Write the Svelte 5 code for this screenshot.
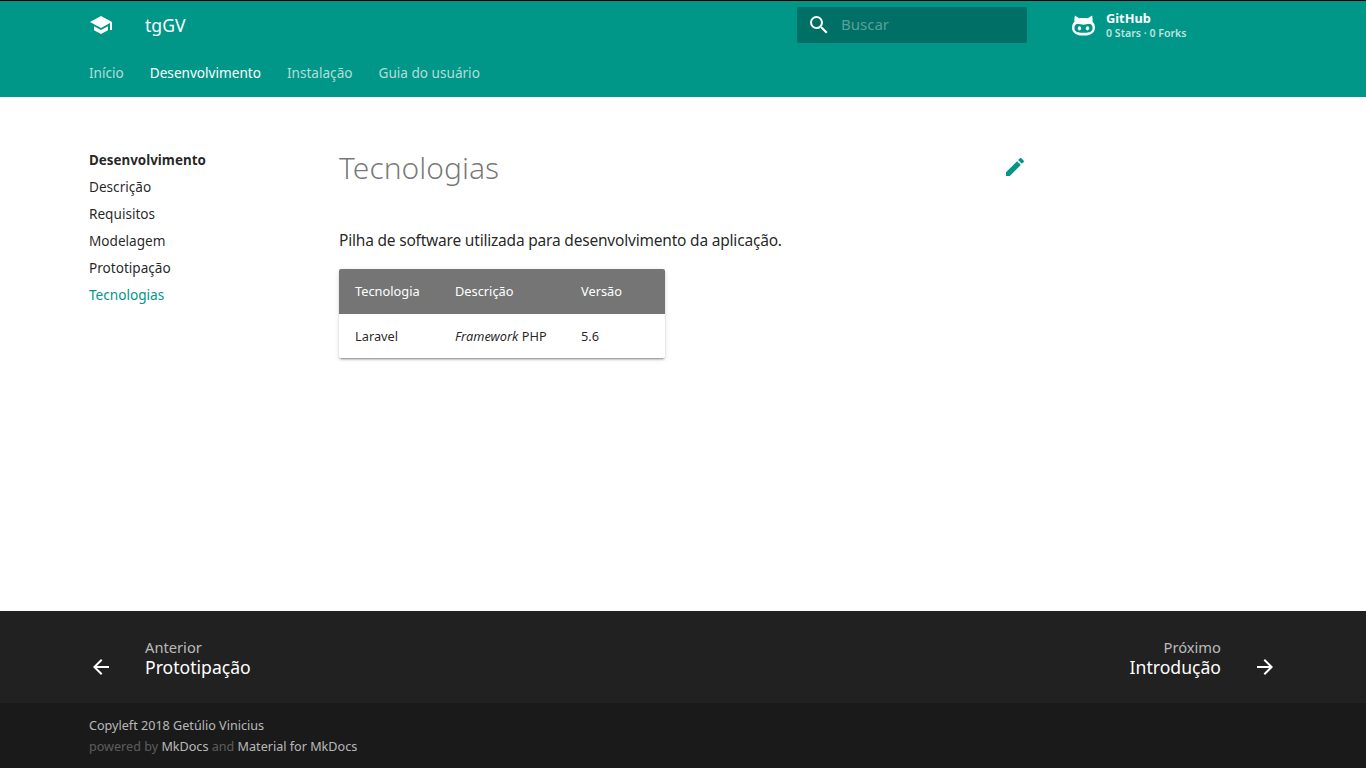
<script>
  const tabs = [
    { label: 'Início' },
    { label: 'Desenvolvimento', active: true },
    { label: 'Instalação' },
    { label: 'Guia do usuário' }
  ];

  const sideLinks = [
    { label: 'Descrição' },
    { label: 'Requisitos' },
    { label: 'Modelagem' },
    { label: 'Prototipação' },
    { label: 'Tecnologias', active: true }
  ];
</script>

<div class="page">
  <header class="header">
    <div class="bar">
      <svg class="icon logo" viewBox="0 0 24 24"><path d="M5 13.18v4L12 21l7-3.82v-4L12 17l-7-3.82zM12 3L1 9l11 6 9-4.91V17h2V9L12 3z" /></svg>
      <span class="site-name">tgGV</span>
      <div class="search">
        <svg class="icon" viewBox="0 0 24 24"><path d="M15.5 14h-.79l-.28-.27A6.47 6.47 0 0 0 16 9.5 6.5 6.5 0 1 0 9.5 16c1.61 0 3.09-.59 4.23-1.57l.27.28v.79l5 4.99L20.49 19l-4.99-5zm-6 0C7.01 14 5 11.99 5 9.5S7.01 5 9.5 5 14 7.01 14 9.5 11.99 14 9.5 14z" /></svg>
        <span class="placeholder">Buscar</span>
      </div>
      <div class="repo">
        <svg class="icon cat" viewBox="0 0 24 22">
          <path fill-rule="evenodd" d="M3 .5 L7.5 3.5 C10 3 14 3 16.5 3.5 L21 .5 C21.5 2.5 21.7 5 21.5 7 C23.2 8.5 24 10.5 24 13 C24 19 19 21.5 12 21.5 C5 21.5 0 19 0 13 C0 10.5 .8 8.5 2.5 7 C2.3 5 2.5 2.5 3 .5 Z M5.5 9.5 C3.5 9.5 2.5 11.5 2.5 13.5 C2.5 17 5 18.5 12 18.5 C19 18.5 21.5 17 21.5 13.5 C21.5 11.5 20.5 9.5 18.5 9.5 C16 9.5 14 10.2 12 10.2 C10 10.2 8 9.5 5.5 9.5 Z" />
          <ellipse cx="7.8" cy="14" rx="1.7" ry="2.2" />
          <ellipse cx="16.2" cy="14" rx="1.7" ry="2.2" />
        </svg>
        <div class="repo-text">
          <strong>GitHub</strong>
          <span>0 Stars · 0 Forks</span>
        </div>
      </div>
    </div>
    <nav class="tabs">
      {#each tabs as tab}
        <a href="#top" class:active={tab.active}>{tab.label}</a>
      {/each}
    </nav>
  </header>

  <main class="main">
    <aside class="sidebar">
      <h2>Desenvolvimento</h2>
      <ul>
        {#each sideLinks as link}
          <li><a href="#top" class:active={link.active}>{link.label}</a></li>
        {/each}
      </ul>
    </aside>
    <article class="content">
      <div class="title-row">
        <h1>Tecnologias</h1>
        <svg class="icon edit" viewBox="0 0 24 24"><path d="M3 17.25V21h3.75L17.81 9.94l-3.75-3.75L3 17.25zM20.71 7.04c.39-.39.39-1.02 0-1.41l-2.34-2.34c-.39-.39-1.02-.39-1.41 0l-1.83 1.83 3.75 3.75 1.83-1.83z" /></svg>
      </div>
      <p>Pilha de software utilizada para desenvolvimento da aplicação.</p>
      <table>
        <thead>
          <tr><th class="col-name">Tecnologia</th><th class="col-desc">Descrição</th><th class="col-version">Versão</th></tr>
        </thead>
        <tbody>
          <tr><td>Laravel</td><td><em>Framework</em> PHP</td><td>5.6</td></tr>
        </tbody>
      </table>
    </article>
  </main>

  <footer>
    <div class="pager">
      <a class="prev" href="#top">
        <svg class="icon" viewBox="0 0 24 24"><path d="M20 11H7.83l5.59-5.59L12 4l-8 8 8 8 1.41-1.41L7.83 13H20v-2z" /></svg>
        <div>
          <small>Anterior</small>
          <span>Prototipação</span>
        </div>
      </a>
      <a class="next" href="#top">
        <div>
          <small>Próximo</small>
          <span>Introdução</span>
        </div>
        <svg class="icon" viewBox="0 0 24 24"><path d="M12 4l-1.41 1.41L16.17 11H4v2h12.17l-5.58 5.59L12 20l8-8z" /></svg>
      </a>
    </div>
    <div class="meta">
      <div class="copyright">Copyleft 2018 Getúlio Vinicius</div>
      <div class="powered">powered by <a href="#top">MkDocs</a> and <a href="#top">Material for MkDocs</a></div>
    </div>
  </footer>
</div>

<style>
  :global(body) {
    margin: 0;
    font-family: "Noto Sans", "Open Sans", sans-serif;
    color: rgba(0, 0, 0, 0.87);
    background: #fff;
  }

  a {
    text-decoration: none;
    color: inherit;
  }

  .page {
    display: flex;
    flex-direction: column;
    min-height: 768px;
  }

  .icon {
    width: 24px;
    height: 24px;
    fill: currentColor;
    flex: none;
  }

  .header {
    background: #009688;
    border-top: 1px solid #000;
    color: #fff;
    padding: 0 73px;
  }

  .bar {
    display: flex;
    align-items: center;
    height: 48px;
    padding: 0 4px;
  }

  .logo {
    margin-left: 12px;
  }

  .site-name {
    margin-left: 32px;
    font-size: 17.6px;
  }

  .search {
    display: flex;
    align-items: center;
    width: 230px;
    height: 36px;
    margin-left: auto;
    background: #006f65;
    border-radius: 2px;
    box-sizing: border-box;
    padding-left: 10px;
  }

  .placeholder {
    margin-left: 10px;
    margin-bottom: 2px;
    font-size: 15px;
    color: rgba(255, 255, 255, 0.36);
  }

  .repo {
    display: flex;
    align-items: center;
    width: 218px;
    box-sizing: border-box;
    margin-left: 44px;
    padding-left: 1px;
  }

  .cat {
    width: 23px;
    height: 21px;
  }

  .repo-text {
    display: flex;
    flex-direction: column;
    margin-left: 11px;
    margin-top: 1px;
    font-size: 10.6px;
    line-height: 15px;
    font-weight: 600;
    color: rgba(255, 255, 255, 0.75);
  }

  .repo-text strong {
    font-size: 12.8px;
    font-weight: 700;
    color: #fff;
  }

  .tabs {
    display: flex;
    gap: 26px;
    height: 48px;
    box-sizing: border-box;
    align-items: center;
    padding: 0 0 2px 16px;
    font-size: 13.6px;
    color: rgba(255, 255, 255, 0.7);
  }

  .tabs a.active {
    color: #fff;
  }

  .main {
    flex: 1;
    display: flex;
    padding: 48px 89px 0;
    box-sizing: border-box;
    width: 1366px;
  }

  .sidebar {
    width: 250px;
    flex: none;
    font-size: 13.6px;
    padding-top: 2px;
  }

  .sidebar h2 {
    margin: 0;
    font-size: 13.4px;
    line-height: 26px;
    font-weight: 700;
  }

  .sidebar ul {
    list-style: none;
    margin: 0;
    padding: 0;
  }

  .sidebar li {
    line-height: 27px;
  }

  .sidebar a.active {
    color: #009688;
  }

  .content {
    width: 688px;
  }

  .title-row {
    display: flex;
    justify-content: space-between;
    align-items: center;
    height: 44px;
    margin-bottom: 39px;
  }

  h1 {
    margin: 0;
    font-size: 30px;
    font-weight: 300;
    color: rgba(0, 0, 0, 0.54);
  }

  .edit {
    color: #009688;
  }

  p {
    margin: 0 0 17px;
    font-size: 15.5px;
    letter-spacing: -0.2px;
    line-height: 24px;
  }

  table {
    border-collapse: collapse;
    table-layout: fixed;
    width: 326px;
    font-size: 12.8px;
    border-radius: 2px;
    overflow: hidden;
    box-shadow: 0 2px 2px 0 rgba(0, 0, 0, 0.14), 0 1px 5px 0 rgba(0, 0, 0, 0.12), 0 3px 1px -2px rgba(0, 0, 0, 0.2);
  }

  .col-name {
    width: 100px;
  }

  .col-desc {
    width: 126px;
  }

  .col-version {
    width: 100px;
  }

  th {
    box-sizing: border-box;
    background: #757575;
    color: #fff;
    font-weight: 400;
    text-align: left;
    height: 45px;
    padding: 0 16px 2px;
  }

  td {
    height: 44px;
    padding: 0 16px;
    white-space: nowrap;
  }

  .pager {
    display: flex;
    justify-content: space-between;
    height: 92px;
    box-sizing: border-box;
    background: #212121;
    color: #fff;
    padding: 2px 89px 0;
    align-items: center;
  }

  .pager a {
    display: flex;
    align-items: flex-end;
  }

  .pager .icon {
    margin-bottom: -2px;
  }

  .prev div {
    margin-left: 32px;
  }

  .next div {
    margin-right: 32px;
    text-align: right;
  }

  .pager small {
    display: block;
    font-size: 14.7px;
    line-height: 16px;
    margin-bottom: 2px;
    color: rgba(255, 255, 255, 0.7);
  }

  .pager span {
    display: block;
    font-size: 17.6px;
    line-height: 20px;
  }

  .meta {
    height: 65px;
    box-sizing: border-box;
    padding: 12px 89px 0;
    background: #1a1a1a;
    font-size: 12.6px;
    line-height: 21px;
    color: rgba(255, 255, 255, 0.7);
  }

  .powered {
    color: rgba(255, 255, 255, 0.3);
  }

  .powered a {
    color: rgba(255, 255, 255, 0.7);
  }
</style>
